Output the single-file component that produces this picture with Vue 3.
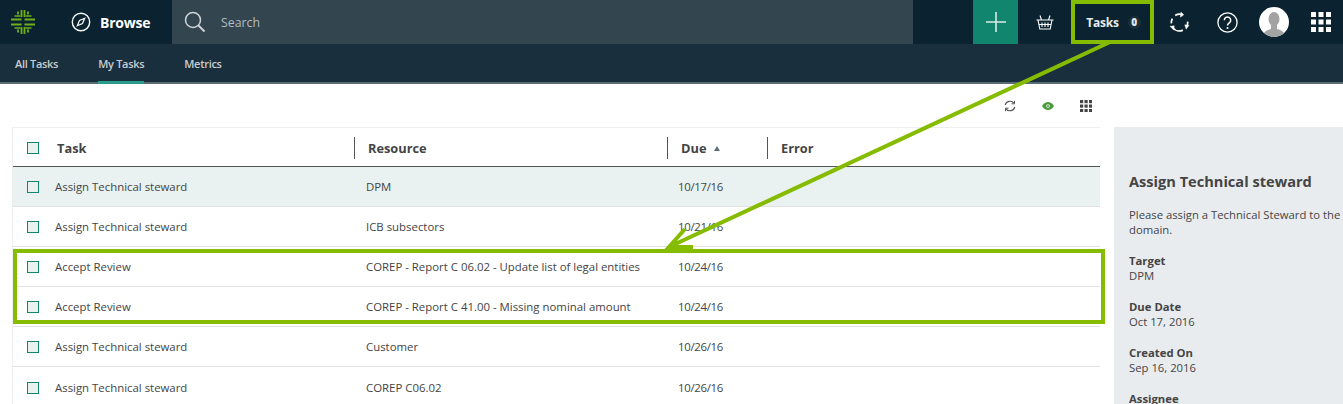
<script setup>
const rows = [
  { task: 'Assign Technical steward', resource: 'DPM', due: '10/17/16', active: true },
  { task: 'Assign Technical steward', resource: 'ICB subsectors', due: '10/21/16' },
  { task: 'Accept Review', resource: 'COREP - Report C 06.02 - Update list of legal entities', due: '10/24/16' },
  { task: 'Accept Review', resource: 'COREP - Report C 41.00 - Missing nominal amount', due: '10/24/16' },
  { task: 'Assign Technical steward', resource: 'Customer', due: '10/26/16' },
  { task: 'Assign Technical steward', resource: 'COREP C06.02', due: '10/26/16' },
]
const details = [
  { label: 'Target', value: 'DPM' },
  { label: 'Due Date', value: 'Oct 17, 2016' },
  { label: 'Created On', value: 'Sep 16, 2016' },
  { label: 'Assignee', value: '' },
]
const gridDots = [0, 1, 2].flatMap((y) => [0, 1, 2].map((x) => ({ x: x * 7.5, y: y * 7.5 })))
const smallDots = [0, 1, 2].flatMap((y) => [0, 1, 2].map((x) => ({ x: x * 4.5, y: y * 4.5 })))
</script>

<template>
  <div class="page">
    <header class="topbar">
      <div class="cell logo">
        <svg width="26" height="26" viewBox="0 0 26 26" fill="none" stroke="#6fb01a" stroke-width="2">
          <path d="M1 10.500h10.500M14.500 10.500h10.500M1 15.500h10.500M14.500 15.500h10.500" stroke-width="2" />
          <path d="M4.500 7h6M15.500 7h6M4.500 19h6M15.500 19h6" stroke-width="1.600" />
          <path d="M11.500 1v7M14.500 1v7M11.500 18v7M14.500 18v7M8 2.500v3M18 2.500v3M8 20.500v3M18 20.500v3" stroke-width="1.800" />
        </svg>
      </div>
      <div class="cell browse">
        <svg width="20" height="20" viewBox="0 0 20 20" fill="none" stroke="#fff">
          <circle cx="10" cy="10" r="8.700" stroke-width="1.400" />
          <path d="M13.700 6.300 11.500 11.500 6.300 13.700 8.500 8.500Z" stroke-width="1.200" />
        </svg>
        <span>Browse</span>
      </div>
      <div class="search">
        <svg width="22" height="22" viewBox="0 0 22 22" fill="none" stroke="#cfd5d8">
          <circle cx="9" cy="9" r="7.500" stroke-width="1.500" />
          <path d="M14.500 14.500 20.500 20.500" stroke-width="2" />
        </svg>
        <span>Search</span>
      </div>
      <div class="gap"></div>
      <div class="cell plus">
        <svg width="22" height="22" viewBox="0 0 22 22" stroke="#d9ece7" stroke-width="1.600"><path d="M11 1v20M1 11h20" /></svg>
      </div>
      <div class="cell basket">
        <svg width="20" height="20" viewBox="0 0 20 20" fill="none" stroke="#fff" stroke-width="1.100">
          <path d="M1.500 8h17M3 8l1.800 9h10.400L17 8M6.500 8 5 3.500M13.500 8 15 3.500M7 10.500v4.500M10 10.500v4.500M13 10.500v4.500M4 12.500h12" />
        </svg>
      </div>
      <div class="cell tasks">
        <span>Tasks</span>
        <b>0</b>
      </div>
      <div class="cell sync">
        <svg width="21" height="22" viewBox="0 0 22 22" fill="none" stroke="#fff" stroke-width="1.800">
          <path d="M6.500 4.200A8.500 8.500 0 0 1 13 3M19.500 10.500A8.500 8.500 0 0 1 18.500 16M14.500 19.500A8.500 8.500 0 0 1 4 17M2.500 12.500A8.500 8.500 0 0 1 3.500 7.500" />
          <path d="M12.500 .5 15.500 3.500 12 6Z" fill="#fff" stroke-width="0.400" />
          <path d="M16.500 14 21 14.500 18 18.500Z" fill="#fff" stroke-width="0.400" />
          <path d="M1 15.500 5.500 15 5 19.500Z" fill="#fff" stroke-width="0.400" />
        </svg>
      </div>
      <div class="cell help">
        <svg width="21" height="21" viewBox="0 0 21 21" fill="none" stroke="#fff">
          <circle cx="10.500" cy="10.500" r="9.600" stroke-width="1.300" />
          <path d="M7.300 8.200a3.200 3.200 0 1 1 5 2.600c-1.200.8-1.800 1.400-1.800 2.700" stroke-width="1.500" />
          <circle cx="10.500" cy="16" r="1" fill="#fff" stroke="none" />
        </svg>
      </div>
      <div class="cell avatar">
        <svg width="30" height="30" viewBox="0 0 30 30">
          <circle cx="15" cy="15" r="15" fill="#fff" />
          <clipPath id="av"><circle cx="15" cy="15" r="15" /></clipPath>
          <g clip-path="url(#av)" fill="#a3a3a3">
            <ellipse cx="15" cy="12" rx="5.500" ry="7" />
            <path d="M4 30c0-5 3-6.500 8-8v-4h6v4c5 1.500 8 3 8 8Z" />
          </g>
        </svg>
      </div>
      <div class="cell apps">
        <svg width="20" height="20" viewBox="0 0 20 20" fill="#fff">
          <rect v-for="(d, i) in gridDots" :key="i" :x="d.x" :y="d.y" width="5" height="5" />
        </svg>
      </div>
    </header>

    <nav class="subnav">
      <a>All Tasks</a>
      <a class="current">My Tasks</a>
      <a>Metrics</a>
    </nav>

    <main class="content">
      <section class="left">
        <div class="tools">
          <svg width="12" height="12" viewBox="0 0 12 12" fill="none" stroke="#555" stroke-width="1.100">
            <path d="M1.200 5A5 5 0 0 1 10 3.200M10.800 7A5 5 0 0 1 2 8.800" />
            <path d="M10.500 .8v3H7.500M1.500 11.200v-3h3" stroke-width="1" />
          </svg>
          <svg width="12" height="8" viewBox="0 0 12 8">
            <path d="M0 4C2 1 4 0 6 0s4 1 6 4c-2 3-4 4-6 4S2 7 0 4Z" fill="#4a9a3c" />
            <circle cx="6" cy="4" r="1.800" fill="#fff" />
            <circle cx="6" cy="4" r="1" fill="#4a9a3c" />
          </svg>
          <svg width="12" height="12" viewBox="0 0 12 12" fill="#444">
            <rect v-for="(d, i) in smallDots" :key="i" :x="d.x" :y="d.y" width="3.200" height="3.200" />
          </svg>
        </div>
        <div class="table">
          <div class="head">
            <div class="check-cell"><i class="check"></i></div>
            <div class="th task">Task</div>
            <div class="th res">Resource</div>
            <div class="th due">Due <em></em></div>
            <div class="th err">Error</div>
          </div>
          <div v-for="(r, i) in rows" :key="i" class="row" :class="{ active: r.active }">
            <div class="check-cell"><i class="check"></i></div>
            <div class="td td-task">{{ r.task }}</div>
            <div class="td td-res">{{ r.resource }}</div>
            <div class="td td-due">{{ r.due }}</div>
            <div></div>
          </div>
        </div>
      </section>
      <aside class="side">
        <h2>Assign Technical steward</h2>
        <p class="desc">Please assign a Technical Steward to the domain.</p>
        <dl>
          <div v-for="d in details" :key="d.label" class="item">
            <dt>{{ d.label }}</dt>
            <dd>{{ d.value }}</dd>
          </div>
        </dl>
      </aside>
    </main>

    <svg class="annot" width="1343" height="404" viewBox="0 0 1343 404" fill="none" stroke="#86bc00" stroke-width="4">
      <rect x="1073" y="2" width="79" height="40" />
      <rect x="15" y="251" width="1088" height="71" />
      <path d="M1110 42 671 246M685 229 669 247H693" />
    </svg>
  </div>
</template>

<style scoped>
.page {
  position: relative;
  width: 1343px;
  height: 404px;
  overflow: hidden;
  background: #fff;
  font-family: "Open Sans", sans-serif;
}
.topbar {
  height: 44px;
  display: flex;
  background: #0b2330;
}
.cell {
  height: 44px;
  display: flex;
  align-items: center;
  justify-content: center;
  flex: none;
}
.logo { width: 45px; margin-right: 2px; }
.browse { width: 123px; margin-right: 2px; gap: 9px; justify-content: flex-start; padding-left: 24px; box-sizing: border-box; color: #fff; font-weight: 700; font-size: 14px; letter-spacing: -0.2px; }
.search {
  width: 741px;
  display: flex;
  align-items: center;
  gap: 15px;
  padding-left: 12px;
  box-sizing: border-box;
  background: #33454f;
  color: #b3bcc1;
  font-size: 12.3px;
}
.gap { width: 60px; flex: none; }
.plus { width: 45px; background: #12856e; margin-right: 2px; }
.basket { width: 50px; margin-right: 1px; }
.tasks { width: 83px; margin-right: 3px; gap: 9px; padding-left: 2px; box-sizing: border-box; color: #e6eaec; font-size: 12px; font-weight: 700; letter-spacing: -0.2px; }
.tasks b {
  width: 13px;
  height: 13px;
  border-radius: 50%;
  background: #1a2f3d;
  font-size: 10px;
  line-height: 13px;
  text-align: center;
  letter-spacing: 0;
}
.sync { width: 45px; margin-right: 2px; }
.help { width: 46px; margin-right: 1px; }
.avatar { width: 45px; margin-right: 2px; }
.apps { width: 45px; }

.subnav {
  height: 38px;
  display: flex;
  gap: 40px;
  padding-left: 15px;
  background: #1a2f3d;
  border-bottom: 2px solid #5a6b75;
  font-size: 11px;
  font-weight: 600;
  letter-spacing: -0.3px;
  color: #c6ced2;
}
.subnav a {
  height: 40px;
  line-height: 40px;
  box-sizing: border-box;
}
.subnav .current { border-bottom: 3px solid #2a9d8a; }

.content {
  display: flex;
  align-items: flex-start;
  padding-left: 12px;
}
.left { width: 1088px; flex: none; }
.tools {
  height: 43px;
  display: flex;
  align-items: center;
  justify-content: flex-end;
  gap: 26px;
  padding: 11px 8px 11px 0;
  box-sizing: border-box;
}
.table { border-left: 1px solid #eee; }
.head, .row {
  display: grid;
  grid-template-columns: 42px 299px 313px 100px 1fr;
  align-items: center;
}
.head {
  height: 40px;
  border-top: 1px solid #eee;
  border-bottom: 1px solid #555;
  box-sizing: border-box;
  padding-top: 1px;
  font-size: 12.800px;
  font-weight: 700;
  color: #444;
}
.check-cell { padding-left: 14px; display: flex; }
.check {
  display: block;
  width: 12px;
  height: 12px;
  box-sizing: border-box;
  border: 1px solid #12856e;
  background: #eaf2f0;
}
.th { height: 22px; line-height: 23px; padding-left: 2px; }
.res, .due, .err { border-left: 1px solid #555; padding-left: 13px; }
.th em {
  display: inline-block;
  width: 0;
  height: 0;
  margin: 0 0 2px 4px;
  border: 3.500px solid transparent;
  border-top: 0;
  border-bottom: 5px solid #5c6f7a;
}
.row {
  height: 40px;
  padding-top: 1px;
  border-bottom: 1px solid #e2e2e2;
  box-sizing: border-box;
  font-size: 11.400px;
  color: #444;
}
.row:last-child { height: 41px; padding-top: 2px; }
.row.active { background: #e9f2f1; }
.td { margin-bottom: 1px; }
.td-res { padding-left: 12px; }
.td-due { padding-left: 11px; letter-spacing: -0.3px; }

.side {
  width: 229px;
  height: 277px;
  margin-left: 14px;
  margin-top: 43px;
  padding: 45px 0 0 15px;
  box-sizing: border-box;
  flex: none;
  background: #e9ecef;
  color: #444;
  font-size: 11.300px;
  line-height: 15px;
  overflow: hidden;
}
.side h2 { margin: 0; font-size: 14.600px; line-height: 18px; font-weight: 700; }
.desc { margin: 17px 0 16px; width: 214px; }
.side dl { margin: 0; }
.item { margin-bottom: 16px; }
.side dt { font-weight: 700; }
.side dd { margin: 0; }
.annot {
  position: absolute;
  left: 0;
  top: 0;
  pointer-events: none;
}
</style>
